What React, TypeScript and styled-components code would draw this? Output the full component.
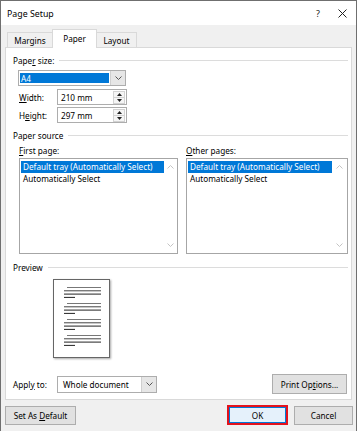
import React from 'react';
import styled, { createGlobalStyle } from 'styled-components';

const GlobalStyle = createGlobalStyle`
  html, body {
    margin: 0;
    padding: 0;
    background: #fff;
  }
  body {
    font-family: "Noto Sans", "Open Sans", sans-serif;
    font-size: 8.2px;
    color: #000;
  }
`;

const Screen = styled.div`
  width: 360px;
  height: 431px;
  display: flex;
  overflow: hidden;
  background: #fff;
`;

const Window = styled.div`
  width: 357px;
  height: 431px;
  box-sizing: border-box;
  border: 1px solid #6f6f6f;
  border-bottom: none;
  background: #f0f0f0;
  display: flex;
  flex-direction: column;
`;

const TitleBar = styled.div`
  height: 24px;
  background: #fff;
  display: flex;
  align-items: center;
  padding-left: 6px;
`;

const Title = styled.span`
  flex: 1;
  font-size: 8.8px;
  margin-top: 1px;
`;

const TitleButton = styled.div<{ $w: number }>`
  width: ${({ $w }) => $w}px;
  height: 24px;
  display: flex;
  align-items: center;
  justify-content: center;
  font-size: 9px;
  color: #222;
`;

const Body = styled.div`
  flex: 1;
  display: flex;
  flex-direction: column;
  padding: 4px 4px 0 4px;
`;

const Tabs = styled.div`
  height: 18px;
  display: flex;
  align-items: flex-end;
  padding-left: 2px;
`;

const Tab = styled.div<{ $w: number; $active?: boolean }>`
  box-sizing: border-box;
  width: ${({ $w }) => $w}px;
  height: ${({ $active }) => ($active ? 19 : 15)}px;
  margin-bottom: ${({ $active }) => ($active ? -1 : 0)}px;
  margin-left: -1px;
  border: 1px solid #d9d9d9;
  border-bottom: none;
  background: ${({ $active }) => ($active ? '#fff' : '#f0f0f0')};
  display: flex;
  align-items: center;
  justify-content: center;
  padding-bottom: ${({ $active }) => ($active ? 2 : 0)}px;
  position: relative;
  z-index: ${({ $active }) => ($active ? 1 : 0)};
  &:first-child {
    margin-left: 0;
  }
`;

const Panel = styled.div`
  height: 353px;
  box-sizing: border-box;
  background: #fff;
  border: 1px solid #d9d9d9;
  padding: 6px 3px 0 7px;
  display: flex;
  flex-direction: column;
`;

const GroupHeader = styled.div<{ $mt?: number }>`
  height: 12px;
  display: flex;
  align-items: center;
  margin-top: ${({ $mt }) => $mt ?? 0}px;
  &::after {
    content: '';
    flex: 1;
    height: 1px;
    background: #dcdcdc;
    margin-left: 5px;
  }
`;

const U = styled.span`
  text-decoration: underline;
  text-underline-offset: 1px;
`;

const Combo = styled.div<{ $w: number; $h: number }>`
  box-sizing: border-box;
  width: ${({ $w }) => $w}px;
  height: ${({ $h }) => $h}px;
  border: 1px solid #adadad;
  background: #fff;
  display: flex;
`;

const PaperCombo = styled(Combo)`
  margin: 4px 0 0 5px;
`;

const ComboValue = styled.div<{ $selected?: boolean }>`
  flex: 1;
  display: flex;
  align-items: center;
  margin: ${({ $selected }) => ($selected ? '2px 1px 2px 1px' : '0')};
  padding-left: ${({ $selected }) => ($selected ? 1 : 5)}px;
  background: ${({ $selected }) => ($selected ? '#0078d7' : 'transparent')};
  color: ${({ $selected }) => ($selected ? '#fff' : '#000')};
`;

const DropButton = styled.div`
  width: 14px;
  background: #e6e6e6;
  border-left: 1px solid #cfcfcf;
  display: flex;
  align-items: center;
  justify-content: center;
`;

const FieldRow = styled.div<{ $mt: number }>`
  height: 16px;
  display: flex;
  align-items: center;
  margin-top: ${({ $mt }) => $mt}px;
  padding-left: 6px;
`;

const FieldLabel = styled.div<{ $w: number }>`
  width: ${({ $w }) => $w}px;
`;

const NumberBox = styled.div`
  box-sizing: border-box;
  width: 70px;
  height: 16px;
  border: 1px solid #adadad;
  background: #fff;
  display: flex;
  align-items: center;
  padding: 1px 1px 1px 3px;
`;

const NumberText = styled.div`
  flex: 1;
`;

const Spinner = styled.div`
  box-sizing: border-box;
  width: 12px;
  height: 13px;
  border: 1px solid #d2d2d2;
  display: flex;
  flex-direction: column;
`;

const SpinHalf = styled.div`
  flex: 1;
  display: flex;
  align-items: center;
  justify-content: center;
  background: #f5f5f5;
  & + & {
    border-top: 1px solid #d2d2d2;
  }
`;

const Columns = styled.div`
  display: grid;
  grid-template-columns: 159px 162px;
  column-gap: 8px;
  padding-left: 6px;
  margin-top: 4px;
`;

const Column = styled.div`
  display: flex;
  flex-direction: column;
`;

const ListLabel = styled.div`
  height: 12px;
  line-height: 12px;
  margin-bottom: 1px;
`;

const ListBox = styled.div`
  box-sizing: border-box;
  height: 96px;
  border: 1px solid #a6a6a6;
  background: #fff;
  display: flex;
`;

const ListItems = styled.div`
  flex: 1;
  padding: 2px 0 0 1px;
`;

const ListItem = styled.div<{ $selected?: boolean }>`
  height: 11.5px;
  line-height: 11.5px;
  padding-left: 2px;
  white-space: nowrap;
  background: ${({ $selected }) => ($selected ? '#0078d7' : 'transparent')};
  color: ${({ $selected }) => ($selected ? '#fff' : '#000')};
`;

const ScrollTrack = styled.div<{ $w: number }>`
  width: ${({ $w }) => $w}px;
  display: flex;
  flex-direction: column;
  justify-content: space-between;
  align-items: center;
  padding: 6px 0 6px;
`;

const PageThumb = styled.div`
  box-sizing: border-box;
  width: 57px;
  height: 79px;
  margin: 6px 0 0 40px;
  border: 1px solid #666;
  background: #fff;
  box-shadow: 1px 1px 2px rgba(0, 0, 0, 0.35);
  display: flex;
`;

const ApplyRow = styled.div`
  margin-top: auto;
  margin-bottom: 5px;
  height: 20px;
  display: flex;
  align-items: center;
`;

const Button = styled.div<{ $w: number }>`
  box-sizing: border-box;
  width: ${({ $w }) => $w}px;
  height: 19px;
  border: 1px solid #adadad;
  background: #e1e1e1;
  display: flex;
  align-items: center;
  justify-content: center;
`;

const PrintButton = styled(Button)`
  height: 20px;
  margin-left: auto;
  margin-right: 1px;
`;

const Footer = styled.div`
  margin-top: 6px;
  height: 19px;
  display: flex;
`;

const FooterRight = styled.div`
  margin-left: auto;
  margin-right: -1px;
  display: flex;
  gap: 6px;
`;

const Highlight = styled.div`
  box-sizing: border-box;
  width: 61px;
  height: 20px;
  margin-top: -1px;
  border: 2px solid #e3121c;
  display: flex;
`;

const DefaultButton = styled(Button)`
  flex: 1;
  height: auto;
  border-color: #0078d7;
  background: #e5f1fb;
`;

const Chevron = ({ up, color = '#555' }: { up?: boolean; color?: string }) => (
  <svg width="7" height="4" viewBox="0 0 7 4">
    <path d={up ? 'M0.5 3.5L3.5 0.5L6.5 3.5' : 'M0.5 0.5L3.5 3.5L6.5 0.5'} fill="none" stroke={color} strokeWidth="1" />
  </svg>
);

const Triangle = ({ up }: { up?: boolean }) => (
  <svg width="5" height="3" viewBox="0 0 5 3">
    <path d={up ? 'M0 3L2.5 0L5 3Z' : 'M0 0L2.5 3L5 0Z'} fill="#222" />
  </svg>
);

const CloseIcon = () => (
  <svg width="9" height="9" viewBox="0 0 9 9">
    <path d="M0.5 0.5L8.5 8.5M8.5 0.5L0.5 8.5" stroke="#222" strokeWidth="1" />
  </svg>
);

const PreviewLines = () => {
  const paras = [0, 1, 2, 3];
  return (
    <svg width="55" height="77" viewBox="0 0 55 77">
      {paras.map((p) => {
        const y = 7.5 + p * 16;
        return (
          <g key={p}>
            <line x1="13" x2="47" y1={y} y2={y} stroke="#777" strokeWidth="1" />
            <line x1="10" x2="47" y1={y + 3.3} y2={y + 3.3} stroke="#444" strokeWidth="1" />
            <line x1="10" x2="47" y1={y + 6.6} y2={y + 6.6} stroke="#222" strokeWidth="1" />
            <line x1="10" x2="21" y1={y + 9.9} y2={y + 9.9} stroke="#222" strokeWidth="1" />
          </g>
        );
      })}
    </svg>
  );
};

const SourceList = ({ mnemonic, rest, track }: { mnemonic: string; rest: string; track: number }) => (
  <Column>
    <ListLabel>
      <U>{mnemonic}</U>
      {rest}
    </ListLabel>
    <ListBox>
      <ListItems>
        <ListItem $selected>Default tray (Automatically Select)</ListItem>
        <ListItem>Automatically Select</ListItem>
      </ListItems>
      <ScrollTrack $w={track}>
        <Chevron up color="#c4c4c4" />
        <Chevron color="#c4c4c4" />
      </ScrollTrack>
    </ListBox>
  </Column>
);

const NumberField = ({ value }: { value: string }) => (
  <NumberBox>
    <NumberText>{value}</NumberText>
    <Spinner>
      <SpinHalf>
        <Triangle up />
      </SpinHalf>
      <SpinHalf>
        <Triangle />
      </SpinHalf>
    </Spinner>
  </NumberBox>
);

export default function App() {
  return (
    <>
      <GlobalStyle />
      <Screen>
        <Window>
          <TitleBar>
            <Title>Page Setup</Title>
            <TitleButton $w={20}>?</TitleButton>
            <TitleButton $w={28}>
              <CloseIcon />
            </TitleButton>
          </TitleBar>
          <Body>
            <Tabs>
              <Tab $w={46}>Margins</Tab>
              <Tab $w={45} $active>
                Paper
              </Tab>
              <Tab $w={41}>Layout</Tab>
            </Tabs>
            <Panel>
              <GroupHeader>
                Pape<U>r</U>&nbsp;size:
              </GroupHeader>
              <PaperCombo $w={108} $h={16}>
                <ComboValue $selected>A4</ComboValue>
                <DropButton>
                  <Chevron />
                </DropButton>
              </PaperCombo>
              <FieldRow $mt={3}>
                <FieldLabel $w={38}>
                  <U>W</U>idth:
                </FieldLabel>
                <NumberField value="210 mm" />
              </FieldRow>
              <FieldRow $mt={2}>
                <FieldLabel $w={38}>
                  H<U>e</U>ight:
                </FieldLabel>
                <NumberField value="297 mm" />
              </FieldRow>
              <GroupHeader $mt={6}>Paper source</GroupHeader>
              <Columns>
                <SourceList mnemonic="F" rest="irst page:" track={13} />
                <SourceList mnemonic="O" rest="ther pages:" track={15} />
              </Columns>
              <GroupHeader $mt={7}>Preview</GroupHeader>
              <PageThumb>
                <PreviewLines />
              </PageThumb>
              <ApplyRow>
                <FieldLabel $w={44}>
                  Appl<U>y</U> to:
                </FieldLabel>
                <Combo $w={100} $h={17}>
                  <ComboValue>Whole document</ComboValue>
                  <DropButton>
                    <Chevron />
                  </DropButton>
                </Combo>
                <PrintButton $w={75}>
                  Print Op<U>t</U>ions...
                </PrintButton>
              </ApplyRow>
            </Panel>
            <Footer>
              <Button $w={71}>
                Set As&nbsp;<U>D</U>efault
              </Button>
              <FooterRight>
                <Highlight>
                  <DefaultButton $w={57}>OK</DefaultButton>
                </Highlight>
                <Button $w={59}>Cancel</Button>
              </FooterRight>
            </Footer>
          </Body>
        </Window>
      </Screen>
    </>
  );
}
